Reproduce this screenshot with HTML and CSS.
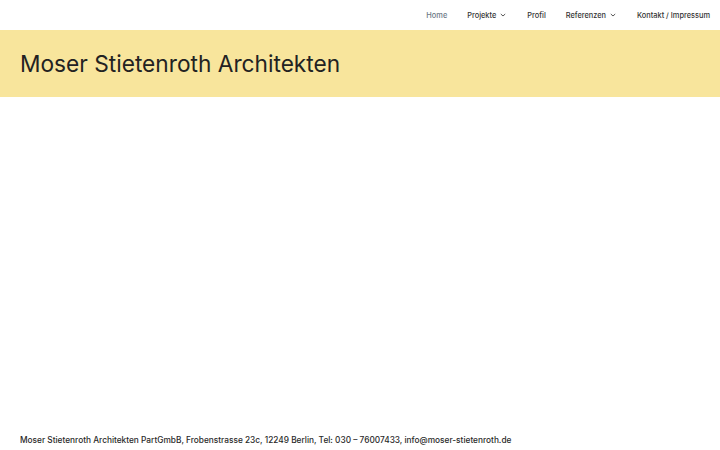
FILE: index.html
```html
<!DOCTYPE html>
<html lang="de">
<head>
<meta charset="utf-8">
<title>Moser Stietenroth Architekten</title>
<link rel="stylesheet" href="styles.css">
</head>
<body>
<div class="page">
  <header class="topbar">
    <nav class="nav">
      <a class="nav-item active" href="#">Home</a>
      <a class="nav-item" href="#">Projekte <svg class="caret" width="8" height="8" viewBox="0 0 8 8"><path d="M1.8 3 L4 5 L6.2 3" fill="none" stroke="#444" stroke-width="0.9"/></svg></a>
      <a class="nav-item" href="#">Profil</a>
      <a class="nav-item" href="#">Referenzen <svg class="caret" width="8" height="8" viewBox="0 0 8 8"><path d="M1.8 3 L4 5 L6.2 3" fill="none" stroke="#444" stroke-width="0.9"/></svg></a>
      <a class="nav-item" href="#">Kontakt / Impressum</a>
    </nav>
  </header>
  <section class="hero">
    <h1 class="title">Moser Stietenroth Architekten</h1>
  </section>
  <main class="content"></main>
  <footer class="footer">Moser Stietenroth Architekten PartGmbB, Frobenstrasse 23c, 12249 Berlin, Tel: 030 – 76007433, info@moser-stietenroth.de</footer>
</div>
</body>
</html>
```
FILE: styles.css
```css
* { box-sizing: border-box; }
html, body { margin: 0; padding: 0; background: #fff; }
body { font-family: Inter, "Noto Sans", sans-serif; color: #222; }
.page { display: flex; flex-direction: column; height: 450px; }
.topbar { height: 30px; display: flex; justify-content: flex-end; align-items: center; }
.nav { display: flex; align-items: center; }
.nav-item { font-size: 7.4px; font-weight: 500; color: #333; text-decoration: none; padding: 0 10px; display: flex; align-items: center; gap: 3px; }
.nav-item.active { color: #6c7886; }
.caret { display: block; }
.hero { background: #f8e59c; height: 67px; display: flex; align-items: center; padding-left: 20px; padding-bottom: 1px; }
.title { margin: 0; font-size: 22.7px; font-weight: 400; color: #222; }
.content { flex: 1; }
.footer { font-size: 8.3px; font-weight: 500; color: #2a2a2a; padding: 4px 20px 0; height: 20px; line-height: 12px; }
```
